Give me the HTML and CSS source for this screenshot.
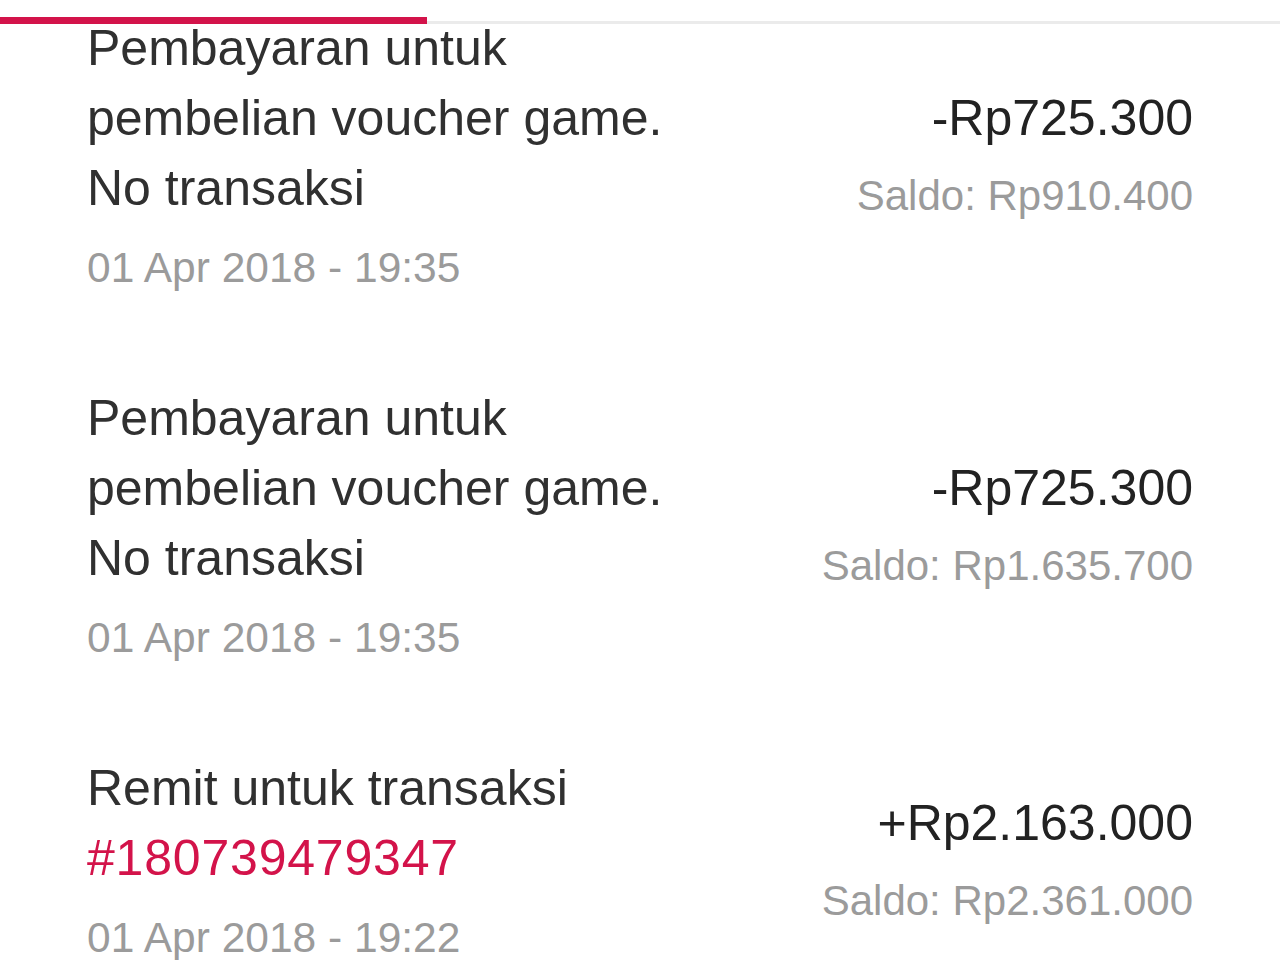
FILE: index.html
```html
<!DOCTYPE html>
<html lang="id">
<head>
<meta charset="utf-8">
<title>Riwayat Transaksi</title>
<link rel="stylesheet" href="styles.css">
</head>
<body>
<header class="tabs">
  <div class="tab-indicator"></div>
  <div class="tab-track"></div>
</header>
<main class="list">
  <section class="row">
    <div class="info">
      <div class="title">Pembayaran untuk<br>pembelian voucher game.<br>No transaksi</div>
      <div class="date">01 Apr 2018 - 19:35</div>
    </div>
    <div class="money">
      <div class="amount">-Rp725.300</div>
      <div class="saldo">Saldo: Rp910.400</div>
    </div>
  </section>
  <section class="row">
    <div class="info">
      <div class="title">Pembayaran untuk<br>pembelian voucher game.<br>No transaksi</div>
      <div class="date">01 Apr 2018 - 19:35</div>
    </div>
    <div class="money">
      <div class="amount">-Rp725.300</div>
      <div class="saldo">Saldo: Rp1.635.700</div>
    </div>
  </section>
  <section class="row">
    <div class="info">
      <div class="title">Remit untuk transaksi<br><span class="ref">#180739479347</span></div>
      <div class="date">01 Apr 2018 - 19:22</div>
    </div>
    <div class="money">
      <div class="amount">+Rp2.163.000</div>
      <div class="saldo">Saldo: Rp2.361.000</div>
    </div>
  </section>
</main>
</body>
</html>
```
FILE: styles.css
```css
html, body {
  margin: 0;
  padding: 0;
  background: #ffffff;
}

body {
  font-family: "Liberation Sans", Arial, sans-serif;
  width: 1280px;
  height: 960px;
  overflow: hidden;
}

.tabs {
  height: 24px;
  display: flex;
  align-items: flex-end;
}

.tab-indicator {
  width: 427px;
  height: 7px;
  background: #d3134a;
}

.tab-track {
  flex: 1;
  height: 3px;
  background: #ebebeb;
}

.list {
  margin-top: -46px;
}

.row {
  display: flex;
  justify-content: space-between;
  align-items: center;
  padding: 35px 87px;
}

.title {
  font-size: 50px;
  line-height: 70px;
  color: #303030;
}

.ref {
  color: #d3134a;
  letter-spacing: 0.8px;
}

.date {
  font-size: 42.5px;
  line-height: 90px;
  color: #9b9b9b;
}

.money {
  text-align: right;
}

.amount {
  font-size: 50px;
  line-height: 70px;
  color: #222222;
}

.saldo {
  font-size: 42px;
  line-height: 86px;
  padding-bottom: 4px;
  color: #9b9b9b;
}
```
